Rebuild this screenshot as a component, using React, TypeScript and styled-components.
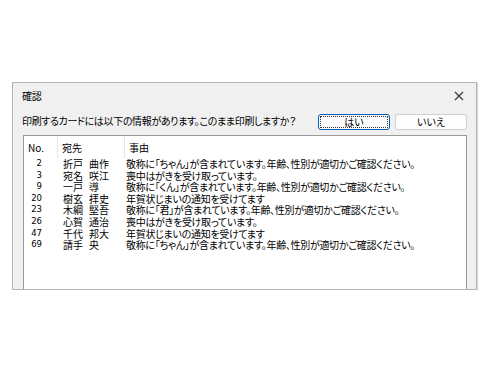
import styled, { createGlobalStyle } from "styled-components";

const GlobalStyle = createGlobalStyle`
  html, body {
    margin: 0;
    background: #ffffff;
  }
  body {
    font-family: "Noto Sans CJK JP", "Noto Sans", sans-serif;
    font-feature-settings: "palt";
    color: #000;
  }
`;

const Stage = styled.div`
  padding: 82px 13px 0 12px;
`;

const Dialog = styled.div`
  width: 463px;
  height: 206px;
  display: flex;
  flex-direction: column;
  background: #f0f0f0;
  border: 1px solid #b4b4b4;
  box-shadow: 1px 1px 0 #d6d6d6;
`;

const TitleBar = styled.div`
  height: 25px;
  display: flex;
  align-items: center;
  justify-content: space-between;
  padding: 0 9px 0 9px;
`;

const Title = styled.span`
  font-size: 10px;
  letter-spacing: -0.2px;
`;

const CloseButton = styled.button`
  width: 16px;
  height: 16px;
  padding: 0;
  border: none;
  background: transparent;
  display: flex;
  align-items: center;
  justify-content: center;
`;

const MessageRow = styled.div`
  height: 27px;
  display: flex;
  align-items: center;
  padding: 0 9px 0 9px;
`;

const Message = styled.span`
  font-size: 10px;
  letter-spacing: -0.35px;
  margin-top: -2px;
`;

const ButtonGroup = styled.div`
  margin-left: auto;
  display: flex;
  gap: 5px;
  margin-top: 0px;
`;

const DialogButton = styled.button<{ $focused?: boolean }>`
  width: 72px;
  height: 16px;
  padding: 0;
  font-family: inherit;
  font-feature-settings: "palt";
  font-size: 10px;
  line-height: 14px;
  background: #fdfdfd;
  color: #000;
  border-radius: 3px;
  border: 1px solid ${(p) => (p.$focused ? "#005fb8" : "#d0d0d0")};
  outline: ${(p) => (p.$focused ? "1px dotted #333" : "none")};
  outline-offset: -3px;
`;

const ListBox = styled.div`
  flex: 1;
  margin: 0 9px 0 10px;
  background: #ffffff;
  border: 1px solid #9a9a9a;
  border-bottom: none;
  display: flex;
  flex-direction: column;
`;

const HeaderRow = styled.div`
  height: 22px;
  display: flex;
  align-items: center;
  font-size: 10px;
`;

const HeaderCell = styled.div<{ $width?: number }>`
  height: 100%;
  display: flex;
  align-items: center;
  padding-left: 4px;
  box-sizing: border-box;
  width: ${(p) => (p.$width ? `${p.$width}px` : "auto")};
  flex: ${(p) => (p.$width ? "none" : "1")};
  border-right: ${(p) => (p.$width ? "1px solid #e5e5e5" : "none")};
`;

const Row = styled.div`
  height: 11.6px;
  display: flex;
  align-items: center;
  font-size: 10px;
  line-height: 11.6px;
  white-space: nowrap;
`;

const NoCell = styled.div`
  width: 34px;
  box-sizing: border-box;
  text-align: right;
  padding-right: 16px;
  font-family: "DejaVu Sans", "Noto Sans", sans-serif;
  font-size: 8.5px;
`;

const NameCell = styled.div`
  width: 67px;
  box-sizing: border-box;
  padding-left: 5px;
  display: flex;
  gap: 6px;
`;

const ReasonCell = styled.div`
  flex: 1;
  padding-left: 1px;
  letter-spacing: -0.3px;
`;

const records = [
  { no: 2, sei: "折戸", mei: "曲作", reason: "敬称に「ちゃん」が含まれています。年齢、性別が適切かご確認ください。" },
  { no: 3, sei: "宛名", mei: "咲江", reason: "喪中はがきを受け取っています。" },
  { no: 9, sei: "一戸", mei: "導", reason: "敬称に「くん」が含まれています。年齢、性別が適切かご確認ください。" },
  { no: 20, sei: "樹玄", mei: "拝史", reason: "年賀状じまいの通知を受けてます" },
  { no: 23, sei: "木綱", mei: "堅吾", reason: "敬称に「君」が含まれています。年齢、性別が適切かご確認ください。" },
  { no: 26, sei: "心賀", mei: "通治", reason: "喪中はがきを受け取っています。" },
  { no: 47, sei: "千代", mei: "邦大", reason: "年賀状じまいの通知を受けてます" },
  { no: 69, sei: "請手", mei: "央", reason: "敬称に「ちゃん」が含まれています。年齢、性別が適切かご確認ください。" },
];

const App = () => {
  return (
    <Stage>
      <GlobalStyle />
      <Dialog>
        <TitleBar>
          <Title>確認</Title>
          <CloseButton aria-label="閉じる">
            <svg width="10" height="10" viewBox="0 0 10 10">
              <path d="M1 1 L9 9 M9 1 L1 9" stroke="#333" strokeWidth="1.1" />
            </svg>
          </CloseButton>
        </TitleBar>
        <MessageRow>
          <Message>印刷するカードには以下の情報があります。このまま印刷しますか？</Message>
          <ButtonGroup>
            <DialogButton $focused>はい</DialogButton>
            <DialogButton>いいえ</DialogButton>
          </ButtonGroup>
        </MessageRow>
        <ListBox>
          <HeaderRow>
            <HeaderCell $width={34}>No.</HeaderCell>
            <HeaderCell $width={67}>宛先</HeaderCell>
            <HeaderCell>事由</HeaderCell>
          </HeaderRow>
          {records.map((r) => (
            <Row key={r.no}>
              <NoCell>{r.no}</NoCell>
              <NameCell>
                <span>{r.sei}</span>
                <span>{r.mei}</span>
              </NameCell>
              <ReasonCell>{r.reason}</ReasonCell>
            </Row>
          ))}
        </ListBox>
      </Dialog>
    </Stage>
  );
};

export default App;
